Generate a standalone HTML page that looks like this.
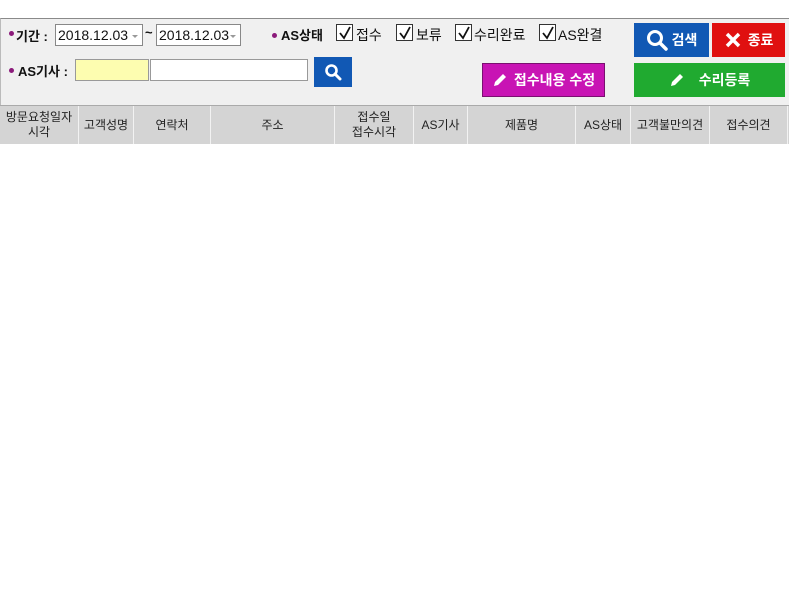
<!DOCTYPE html>
<html><head><meta charset="utf-8"><style>
*{margin:0;padding:0;box-sizing:border-box}
body{width:789px;height:592px;background:#fff;position:relative;overflow:hidden;font-family:"Liberation Sans","Noto Sans CJK KR",sans-serif;font-size:13px;color:#111}
.a{position:absolute}
.panel{left:0;top:18px;width:789px;height:87px;background:#f0f0f0;border-top:1px solid #8a8a8a;border-left:1px solid #bbb}
.dot{width:5px;height:5px;border-radius:50%;background:#8b1a7a}
.lbl{font-weight:bold;font-size:13px}
.date{height:22px;border:1px solid #888;background:#fff;font-size:14px;line-height:20px;padding-left:2px}
.date:after{content:"";position:absolute;right:4px;top:10px;border:3px solid transparent;border-top:3px solid #999}
.cb{width:17px;height:17px;border:1px solid #333;background:#fff}
.cb svg{position:absolute;left:1px;top:1px}
.ct{font-size:14px}
.btn{color:#fff;font-weight:bold;display:flex;align-items:center;justify-content:center;font-size:14px}
.hdr{top:105px;height:39px;background:#d4d4d4;border-top:1px solid #aaa}
.col{top:106px;height:38px;border-left:1px solid #f2f2f2;font-size:12px;color:#222;display:flex;align-items:center;justify-content:center;text-align:center;line-height:15px}
</style></head><body>
<div class="a panel"></div>
<div class="a dot" style="left:9px;top:31px"></div>
<div class="a lbl" style="left:16px;top:26px">기간 :</div>
<div class="a date" style="left:55px;top:24px;width:88px">2018.12.03</div>
<div class="a lbl" style="left:145px;top:25px">~</div>
<div class="a date" style="left:156px;top:24px;width:85px">2018.12.03</div>
<div class="a dot" style="left:272px;top:33px"></div>
<div class="a lbl" style="left:281px;top:25px">AS상태</div>
<div class="a cb" style="left:336px;top:24px"><svg width="14" height="14"><path d="M2 7 L6 12 L12 1" stroke="#111" stroke-width="1.8" fill="none"/></svg></div>
<div class="a ct" style="left:356px;top:25px">접수</div>
<div class="a cb" style="left:396px;top:24px"><svg width="14" height="14"><path d="M2 7 L6 12 L12 1" stroke="#111" stroke-width="1.8" fill="none"/></svg></div>
<div class="a ct" style="left:416px;top:25px">보류</div>
<div class="a cb" style="left:455px;top:24px"><svg width="14" height="14"><path d="M2 7 L6 12 L12 1" stroke="#111" stroke-width="1.8" fill="none"/></svg></div>
<div class="a ct" style="left:474px;top:25px">수리완료</div>
<div class="a cb" style="left:539px;top:24px"><svg width="14" height="14"><path d="M2 7 L6 12 L12 1" stroke="#111" stroke-width="1.8" fill="none"/></svg></div>
<div class="a ct" style="left:558px;top:25px">AS완결</div>
<div class="a dot" style="left:9px;top:68px"></div>
<div class="a lbl" style="left:18px;top:61px">AS기사 :</div>
<div class="a" style="left:75px;top:59px;width:74px;height:22px;background:#fdfdb0;border:1px solid #999"></div>
<div class="a" style="left:150px;top:59px;width:158px;height:22px;background:#fff;border:1px solid #999"></div>
<div class="a btn" style="left:314px;top:57px;width:38px;height:30px;background:#1158b4"><svg width="18" height="18"><circle cx="7.5" cy="7.5" r="5" stroke="#fff" stroke-width="2.6" fill="none"/><path d="M11 11 L16 16" stroke="#fff" stroke-width="3" stroke-linecap="round"/></svg></div>
<div class="a btn" style="left:634px;top:23px;width:75px;height:34px;background:#1158b4"><svg width="22" height="22" style="margin-right:4px"><circle cx="9" cy="9" r="6.5" stroke="#fff" stroke-width="3" fill="none"/><path d="M14 14 L20 20" stroke="#fff" stroke-width="3.5" stroke-linecap="round"/></svg>검색</div>
<div class="a btn" style="left:712px;top:23px;width:73px;height:34px;background:#e01010"><svg width="18" height="18" style="margin-right:6px"><path d="M3 3 L15 15 M15 3 L3 15" stroke="#fff" stroke-width="3.5"/></svg>종료</div>
<div class="a btn" style="left:482px;top:63px;width:123px;height:34px;background:#c814b4;border:1px solid #7a1070"><svg width="16" height="16" style="margin-right:6px"><path d="M2 14 L3 10 L11 2 L14 5 L6 13 Z" fill="#fff"/></svg>접수내용 수정</div>
<div class="a btn" style="left:634px;top:63px;width:151px;height:34px;background:#20aa30"><svg width="16" height="16" style="margin-right:14px"><path d="M2 14 L3 10 L11 2 L14 5 L6 13 Z" fill="#fff"/></svg>수리등록</div>
<div class="a hdr" style="left:0;width:789px"></div>
<div class="a col" style="left:0;width:78px;border-left:none">방문요청일자<br>시각</div>
<div class="a col" style="left:78px;width:55px">고객성명</div>
<div class="a col" style="left:133px;width:77px">연락처</div>
<div class="a col" style="left:210px;width:124px">주소</div>
<div class="a col" style="left:334px;width:79px">접수일<br>접수시각</div>
<div class="a col" style="left:413px;width:54px">AS기사</div>
<div class="a col" style="left:467px;width:108px">제품명</div>
<div class="a col" style="left:575px;width:55px">AS상태</div>
<div class="a col" style="left:630px;width:79px">고객불만의견</div>
<div class="a col" style="left:709px;width:78px">접수의견</div>
<div class="a col" style="left:787px;width:2px"></div>
</body></html>
